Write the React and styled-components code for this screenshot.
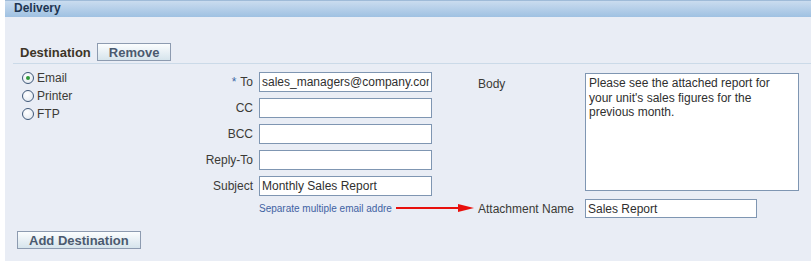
import React from 'react';
import styled, { createGlobalStyle } from 'styled-components';

// Global
const GlobalStyle = createGlobalStyle`
    body {
        margin: 0;
        background: #ffffff;
        font-family: "Liberation Sans", Arial, sans-serif;
        font-size: 12px;
        color: #3b3a36;
    }
`;

// Styled
const Page = styled.div`
    margin-left: 5px;
    height: 261px;
    background-color: #e9edf5;
`;

const Header = styled.div`
    height: 17px;
    box-sizing: border-box;
    padding-left: 9px;
    border-top: 1px solid #9fbbd8;
    background: linear-gradient(#cadcef, #9fc1e2);
    font-weight: 700;
    font-size: 12px;
    line-height: 15px;
    color: #1e3551;
`;

const Content = styled.div`
    padding-left: 8px;
`;

const DestRow = styled.div`
    display: flex;
    align-items: flex-end;
    gap: 6px;
    padding: 26px 0 2px 7px;
    border-bottom: 1px solid #cbdae8;
`;

const SectionTitle = styled.span`
    font-size: 13px;
    font-weight: 700;
    line-height: 16px;
    color: #3d3528;
`;

const Button = styled.button`
    height: 18px;
    box-sizing: border-box;
    padding: 0 ${(p) => p.$pad || 10}px;
    border: 1px solid #8d9bb0;
    border-radius: 0;
    background: linear-gradient(#fbfdfe, #d6e4ec);
    font-family: inherit;
    font-size: 13px;
    font-weight: 700;
    line-height: 15px;
    color: #4b5a6f;
`;

const Form = styled.div`
    display: flex;
`;

const RadioGroup = styled.div`
    width: 160px;
    padding: 5px 0 0 9px;
    box-sizing: border-box;
`;

const RadioRow = styled.label`
    display: flex;
    align-items: center;
    gap: 3px;
    height: 18px;
    font-size: 12px;
`;

const RadioDot = styled.span`
    width: 12px;
    height: 12px;
    box-sizing: border-box;
    border-radius: 50%;
    border: 1px solid #3f5878;
    background: radial-gradient(circle at 40% 35%, #ffffff, #dfe6ee);
    display: flex;
    align-items: center;
    justify-content: center;

    &::after {
        content: '';
        width: 4px;
        height: 4px;
        border-radius: 50%;
        background: ${(p) => (p.$checked ? '#2f9a3a' : 'transparent')};
    }
`;

const FieldGrid = styled.div`
    display: grid;
    grid-template-columns: 80px 173px;
    grid-template-rows: repeat(5, 20px) 12px;
    column-gap: 6px;
    row-gap: 6px;
    padding-top: 8px;
`;

const Label = styled.span`
    display: flex;
    align-items: center;
    justify-content: ${(p) => (p.$left ? 'flex-start' : 'flex-end')};
    white-space: nowrap;
    font-size: 12px;
`;

const Req = styled.span`
    color: #3f6aa6;
    margin-right: 4px;
`;

const TextInput = styled.input`
    width: 100%;
    height: 100%;
    box-sizing: border-box;
    margin: 0;
    padding: 0 2px;
    border: 1px solid #7f96b2;
    background: #ffffff;
    font-family: inherit;
    font-size: 12px;
    color: #2f2f2f;
    outline: none;
`;

const HintRow = styled.div`
    grid-column: 2;
    height: 12px;
    display: flex;
    align-items: center;
    white-space: nowrap;
    overflow: visible;
`;

const Hint = styled.span`
    font-size: 10px;
    color: #3f62a3;
`;

const Arrow = styled.svg`
    flex: none;
    margin-left: 4px;
`;

const RightGrid = styled.div`
    display: grid;
    grid-template-columns: 107px 214px;
    grid-template-rows: 118px 19px;
    row-gap: 8px;
    padding: 9px 0 0 46px;
`;

const TopLabel = styled(Label)`
    align-items: flex-start;
    padding-top: 4px;
`;

const TextArea = styled.textarea`
    width: 100%;
    height: 100%;
    box-sizing: border-box;
    margin: 0;
    padding: 2px 3px;
    border: 1px solid #7f96b2;
    resize: none;
    font-family: inherit;
    font-size: 12px;
    line-height: 14.5px;
    color: #2f2f2f;
    outline: none;
`;

const ShortCell = styled.div`
    width: 172px;
`;

const Footer = styled.div`
    padding: 13px 0 0 4px;
`;

const fields = [
    { label: 'To', required: true, value: 'sales_managers@company.com' },
    { label: 'CC', value: '' },
    { label: 'BCC', value: '' },
    { label: 'Reply-To', value: '' },
    { label: 'Subject', value: 'Monthly Sales Report' },
];

const destinations = ['Email', 'Printer', 'FTP'];

const App = () => {
    return (
        <>
            <GlobalStyle />
            <Page>
                <Header>Delivery</Header>
                <Content>
                    <DestRow>
                        <SectionTitle>Destination</SectionTitle>
                        <Button $pad={11}>Remove</Button>
                    </DestRow>

                    <Form>
                        <RadioGroup>
                            {destinations.map((d, i) => (
                                <RadioRow key={d}>
                                    <RadioDot $checked={i === 0} />
                                    {d}
                                </RadioRow>
                            ))}
                        </RadioGroup>

                        <FieldGrid>
                            {fields.map((f) => (
                                <React.Fragment key={f.label}>
                                    <Label>
                                        {f.required && <Req>*</Req>}
                                        {f.label}
                                    </Label>
                                    <TextInput defaultValue={f.value} readOnly />
                                </React.Fragment>
                            ))}
                            <HintRow>
                                <Hint>Separate multiple email addre</Hint>
                                <Arrow width="78" height="10" viewBox="0 0 78 10">
                                    <line x1="0" y1="5" x2="64" y2="5" stroke="#e8100c" strokeWidth="2" />
                                    <polygon points="62,1 78,5 62,9" fill="#e8100c" />
                                </Arrow>
                            </HintRow>
                        </FieldGrid>

                        <RightGrid>
                            <TopLabel $left>Body</TopLabel>
                            <TextArea
                                readOnly
                                defaultValue="Please see the attached report for your unit's sales figures for the previous month."
                            />
                            <Label $left>Attachment Name</Label>
                            <ShortCell>
                                <TextInput defaultValue="Sales Report" readOnly />
                            </ShortCell>
                        </RightGrid>
                    </Form>

                    <Footer>
                        <Button $pad={11}>Add Destination</Button>
                    </Footer>
                </Content>
            </Page>
        </>
    );
};

export default App;
